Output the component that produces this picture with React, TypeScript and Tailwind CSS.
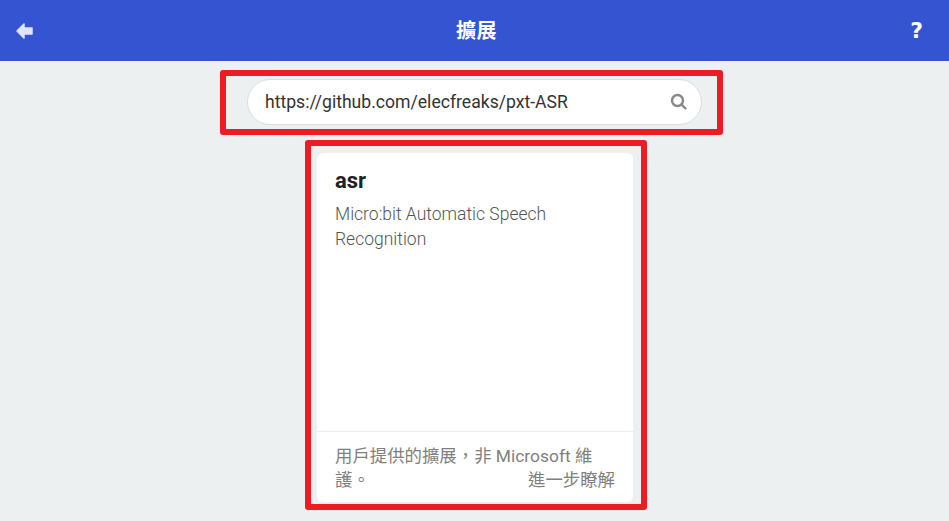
const font = {
  fontFamily: 'Roboto, "Noto Sans CJK TC", "Noto Sans", sans-serif',
};

export default function App() {
  return (
    <div style={font} className="w-[949px] h-[521px] bg-[#ecf0f1] overflow-hidden flex flex-col">
      <header className="h-[61px] shrink-0 bg-[#3454d1] flex items-center justify-between pl-[15px] pr-[26px]">
        <svg width="20" height="20" viewBox="0 0 20 20" className="text-[#dfe5fb]">
          <path d="M9 3 L2 10 L9 17 L9 13 L17 13 L17 7 L9 7 Z" fill="currentColor" strokeLinejoin="round" stroke="currentColor" strokeWidth="1.5" />
        </svg>
        <h1 className="text-white text-[20px] font-bold tracking-wide ml-[8px]">擴展</h1>
        <span className="text-white text-[22px] font-black" style={{ fontFamily: '"DejaVu Sans", sans-serif' }}>?</span>
      </header>

      <main className="flex flex-col">
        <div className="ml-[220px] mt-[9px] w-[503px] h-[65px] border-[6px] border-[#ed1c24] rounded-[3px] pl-[21px] pr-[15px] pt-[3px]">
          <div className="h-[46px] bg-white rounded-full border border-[#dcdcdc] flex items-center justify-between pl-[17px] pr-[13px]">
            <span className="text-[17.6px] text-[#333]">https://github.com/elecfreaks/pxt-ASR</span>
            <svg width="18" height="18" viewBox="0 0 18 18" fill="none" stroke="#888" strokeWidth="2.4" strokeLinecap="round">
              <circle cx="7.5" cy="7.5" r="5.5" />
              <path d="M11.8 11.8 L15.5 15.5" />
            </svg>
          </div>
        </div>

        <div className="ml-[305px] mt-[5px] w-[342px] h-[370px] border-[6px] border-[#ed1c24] rounded-[3px] pl-[6px] pr-[8px] pt-[7px]">
          <div className="h-[349px] bg-white rounded-[6px] flex flex-col">
            <div className="flex-1 px-[18px] pt-[15px]">
              <div className="text-[22px] font-bold text-[#222] leading-[26px]">asr</div>
              <p className="mt-[8px] text-[17.5px] font-light leading-[25px] text-[#555] pr-[30px]">
                Micro:bit Automatic Speech Recognition
              </p>
            </div>
            <div className="h-[71px] border-t border-[#eaeef0] px-[18px] pt-[12px] text-[17.4px] leading-[24px] text-[#808080]">
              <p>用戶提供的擴展，非 Microsoft 維</p>
              <div className="flex justify-between">
                <span>護。</span>
                <span>進一步瞭解</span>
              </div>
            </div>
          </div>
        </div>
      </main>
    </div>
  );
}
